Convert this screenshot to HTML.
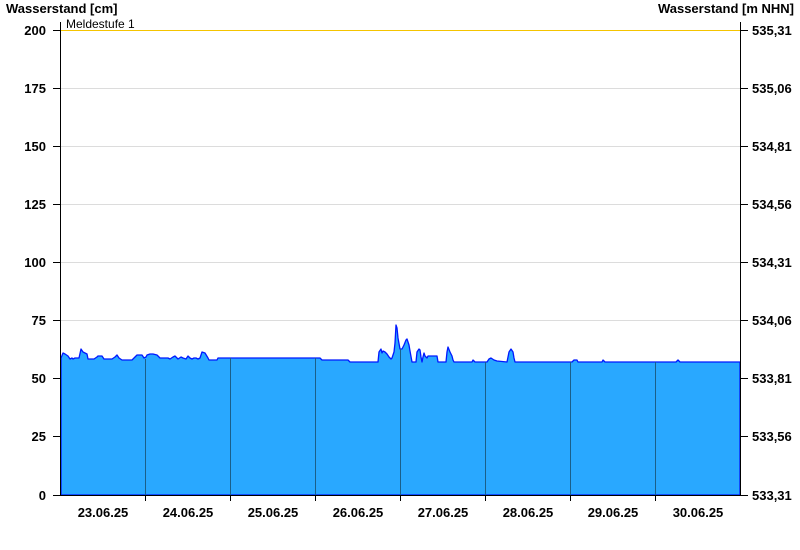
<!DOCTYPE html>
<html><head><meta charset="utf-8"><style>
html,body{margin:0;padding:0;background:#fff;}
svg{display:block;font-family:"Liberation Sans",Arial,sans-serif;}
</style></head><body>
<svg width="800" height="550" viewBox="0 0 800 550">
<g stroke="#dcdcdc" stroke-width="1">
<line x1="60" y1="88.5" x2="740" y2="88.5"/><line x1="60" y1="146.5" x2="740" y2="146.5"/>
<line x1="60" y1="204.5" x2="740" y2="204.5"/><line x1="60" y1="262.5" x2="740" y2="262.5"/>
<line x1="60" y1="320.5" x2="740" y2="320.5"/><line x1="60" y1="378.5" x2="740" y2="378.5"/>
<line x1="60" y1="436.5" x2="740" y2="436.5"/>
</g>
<line x1="60" y1="30.5" x2="740" y2="30.5" stroke="#f5c400" stroke-width="1"/>
<text x="66" y="28" font-size="12" fill="#000">Meldestufe 1</text>
<polygon fill="#29a8ff" stroke="#0019ff" stroke-width="1.3" stroke-linejoin="round" points="
61,495 61,358 63,353 65,354 68,356 70,359 72,358 73,359 75,358 79,358 81,349 83,352 87,354 88,359 94,359 97,357 98,356 102,356 104,359 112,359 115,357 117,355 119,358 122,360 132,360 135,357 137,355 142,355 144,358 146,357 147,355 150,354 153,354 157,355 160,358 162,358 168,358 170,359 173,357 175,356 177,358 178,359 181,357 183,358 186,359 188,356 190,358 192,359 194,358 196,358 198,359 200,358 202,352 205,353 208,358 209,360 217,360 218,358 320,358 322,360 348,360 350,362 378,362 379,352 381,349 382,353 383,351 385,352 387,354 389,357 391,359 392,358 394,352 395,343 396,325 397,328 398,338 400,349 402,349 404,345 406,340 407,339 409,345 410,351 412,362 416,362 417,352 419,349 420,350 421,357 422,362 423,357 424,353 425,356 427,358 428,356 437,356 438,362 446,362 447,352 448,347 450,352 452,356 453,360 454,362 472,362 473,360 475,362 477,362 487,362 489,359 491,358 494,360 497,361 507,362 509,352 511,349 513,352 514,358 515,362 572,362 574,360 577,360 578,362 602,362 603,360 605,362 676,362 678,360 680,362 740,362 740,495"/>
<g stroke="#1a5f8a" stroke-width="1">
<line x1="145.5" y1="359" x2="145.5" y2="495"/><line x1="230.5" y1="358" x2="230.5" y2="495"/>
<line x1="315.5" y1="358" x2="315.5" y2="495"/><line x1="400.5" y1="349" x2="400.5" y2="495"/>
<line x1="485.5" y1="362" x2="485.5" y2="495"/><line x1="570.5" y1="362" x2="570.5" y2="495"/>
<line x1="655.5" y1="362" x2="655.5" y2="495"/>
</g>
<g stroke="#000" stroke-width="1" fill="none">
<line x1="60.5" y1="22" x2="60.5" y2="495"/><line x1="740.5" y1="22" x2="740.5" y2="495"/>
<line x1="60" y1="495.5" x2="741" y2="495.5"/>
<path d="M53 30.5h7M53 88.5h7M53 146.5h7M53 204.5h7M53 262.5h7M53 320.5h7M53 378.5h7M53 436.5h7M53 495.5h7"/>
<path d="M740 30.5h8M740 88.5h8M740 146.5h8M740 204.5h8M740 262.5h8M740 320.5h8M740 378.5h8M740 436.5h8M740 495.5h8"/>
<path d="M145.5 495v6M230.5 495v6M315.5 495v6M400.5 495v6M485.5 495v6M570.5 495v6M655.5 495v6"/>
</g>
<g font-size="13" font-weight="bold" fill="#000">
<text x="6" y="13">Wasserstand [cm]</text>
<text x="794" y="13" text-anchor="end">Wasserstand [m NHN]</text>
<g text-anchor="end">
<text x="46" y="35">200</text><text x="46" y="93">175</text><text x="46" y="151">150</text>
<text x="46" y="209">125</text><text x="46" y="267">100</text><text x="46" y="325">75</text>
<text x="46" y="383">50</text><text x="46" y="441">25</text><text x="46" y="500">0</text>
</g>
<g>
<text x="752" y="35">535,31</text><text x="752" y="93">535,06</text><text x="752" y="151">534,81</text>
<text x="752" y="209">534,56</text><text x="752" y="267">534,31</text><text x="752" y="325">534,06</text>
<text x="752" y="383">533,81</text><text x="752" y="441">533,56</text><text x="752" y="500">533,31</text>
</g>
<g text-anchor="middle">
<text x="103" y="517">23.06.25</text><text x="188" y="517">24.06.25</text><text x="273" y="517">25.06.25</text>
<text x="358" y="517">26.06.25</text><text x="443" y="517">27.06.25</text><text x="528" y="517">28.06.25</text>
<text x="613" y="517">29.06.25</text><text x="698" y="517">30.06.25</text>
</g>
</g>
</svg>
</body></html>
